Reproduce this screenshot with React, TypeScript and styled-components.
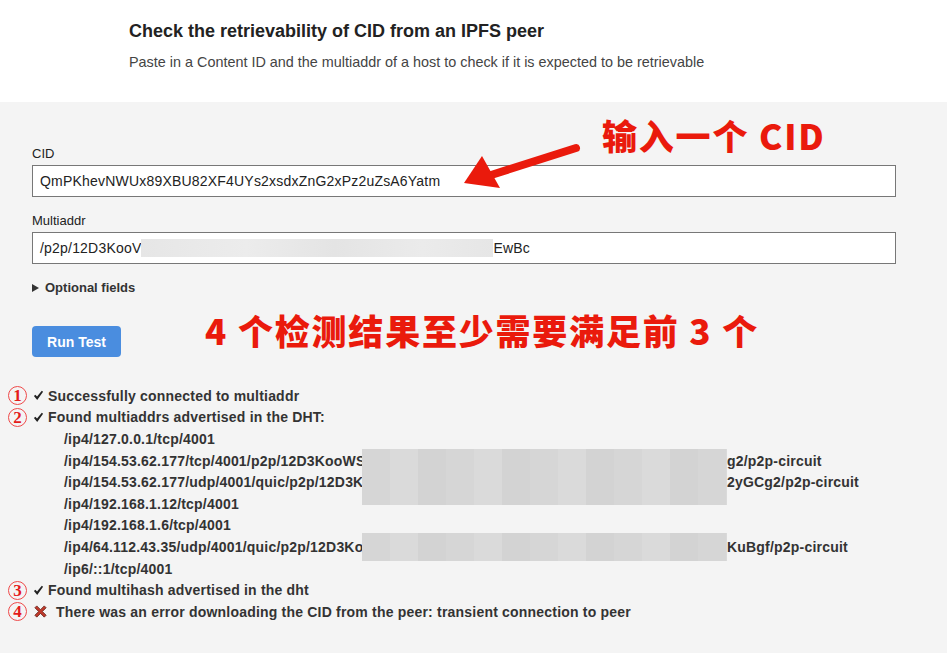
import React from "react";
import styled, { createGlobalStyle } from "styled-components";

const GlobalStyle = createGlobalStyle`
  html, body {
    margin: 0;
    padding: 0;
    background: #f4f4f4;
    font-family: "Liberation Sans", Arial, sans-serif;
    color: #333;
  }
  * { box-sizing: border-box; }
`;

const Page = styled.div`
  position: relative;
  width: 947px;
  height: 653px;
  overflow: hidden;
  background: #f4f4f4;
`;

const Header = styled.header`
  background: #fff;
  height: 102px;
  padding: 21px 0 0 129px;
`;

const Title = styled.h1`
  margin: 0;
  font-size: 18px;
  font-weight: bold;
  color: #222;
  line-height: 21px;
`;

const Subtitle = styled.p`
  margin: 12px 0 0;
  font-size: 14.4px;
  color: #444;
  line-height: 16px;
`;

const Main = styled.main`
  padding: 44px 51px 0 32px;
`;

const Field = styled.div`
  display: flex;
  flex-direction: column;
  margin-bottom: 16px;
`;

const Label = styled.label`
  font-size: 13px;
  color: #222;
  line-height: 15px;
  margin-bottom: 4px;
`;

const InputBox = styled.div`
  position: relative;
  height: 32px;
  border: 1px solid #777;
  background: #fff;
  display: flex;
  align-items: center;
  padding-left: 7px;
  font-size: 14px;
  letter-spacing: 0.2px;
  color: #222;
  white-space: nowrap;
`;

const Blur = styled.span<{ $w: number; $h: number }>`
  display: inline-block;
  width: ${(p) => p.$w}px;
  height: ${(p) => p.$h}px;
  vertical-align: middle;
  background: linear-gradient(
    90deg,
    #e6e6e6 0%,
    #ececec 30%,
    #e4e4e4 55%,
    #ebebeb 80%,
    #e6e6e6 100%
  );
`;

const Optional = styled.div`
  display: flex;
  align-items: center;
  gap: 6px;
  margin-top: 9px;
  font-size: 13px;
  font-weight: bold;
  color: #333;
`;

const Triangle = styled.span`
  width: 0;
  height: 0;
  border-top: 4px solid transparent;
  border-bottom: 4px solid transparent;
  border-left: 7px solid #333;
`;

const RunButton = styled.button`
  margin-top: 31px;
  width: 89px;
  height: 31px;
  border: none;
  border-radius: 4px;
  background: #4a8ddf;
  color: #fff;
  font-family: "Liberation Sans", Arial, sans-serif;
  font-weight: bold;
  font-size: 14px;
`;

const Results = styled.div`
  margin-top: 28px;
  margin-left: -24px;
  display: flex;
  flex-direction: column;
`;

const ResultRow = styled.div<{ $indent?: boolean }>`
  display: flex;
  align-items: center;
  height: 21.6px;
  font-size: 14px;
  letter-spacing: 0.2px;
  font-weight: bold;
  color: #333;
  white-space: nowrap;
  padding-left: ${(p) => (p.$indent ? "56px" : "0")};
`;

const Circled = styled.span`
  width: 19px;
  height: 19px;
  border: 1px solid #ef4a4a;
  border-radius: 50%;
  color: #e41b1b;
  font-family: "Liberation Serif", "Times New Roman", serif;
  font-size: 17px;
  line-height: 1;
  font-weight: bold;
  letter-spacing: 0;
  display: inline-flex;
  align-items: center;
  justify-content: center;
  margin-right: 6px;
  flex-shrink: 0;
`;

const CheckIcon = styled.svg`
  width: 11px;
  height: 11px;
  margin-right: 4px;
  flex-shrink: 0;
`;

const CrossIcon = styled.svg`
  width: 15px;
  height: 15px;
  margin-right: 8px;
  flex-shrink: 0;
`;

const Annotation = styled.div<{ $x: number; $y: number }>`
  position: absolute;
  left: ${(p) => p.$x}px;
  top: ${(p) => p.$y}px;
  color: #ea1a0c;
  font-family: "Noto Sans CJK SC", "Liberation Sans", sans-serif;
  font-weight: 900;
  font-size: 35px;
  letter-spacing: 1.8px;
  line-height: 40px;
  white-space: nowrap;
`;

const Arrow = styled.svg`
  position: absolute;
  left: 458px;
  top: 138px;
  width: 130px;
  height: 52px;
`;

const BlurPatch = styled.div<{ $x: number; $y: number; $w: number; $h: number }>`
  position: absolute;
  left: ${(p) => p.$x}px;
  top: ${(p) => p.$y}px;
  width: ${(p) => p.$w}px;
  height: ${(p) => p.$h}px;
  background: repeating-linear-gradient(
    90deg,
    #d6d6d6 0px,
    #d6d6d6 28px,
    #dadada 28px,
    #dadada 56px,
    #d3d3d3 56px,
    #d3d3d3 84px
  );
`;

const Tail = styled.span`
  position: absolute;
  left: 727px;
`;

const addrs = [
  "/ip4/127.0.0.1/tcp/4001",
  "/ip4/154.53.62.177/tcp/4001/p2p/12D3KooWS",
  "/ip4/154.53.62.177/udp/4001/quic/p2p/12D3K",
  "/ip4/192.168.1.12/tcp/4001",
  "/ip4/192.168.1.6/tcp/4001",
  "/ip4/64.112.43.35/udp/4001/quic/p2p/12D3Ko",
  "/ip6/::1/tcp/4001",
];

// 가려진 주소의 끝부분
const tails: Record<number, string> = {
  1: "g2/p2p-circuit",
  2: "2yGCg2/p2p-circuit",
  5: "KuBgf/p2p-circuit",
};

const Check = () => (
  <CheckIcon viewBox="0 0 12 12">
    <path
      d="M1 6.6 L2.6 5.2 L4.4 7.2 L9.6 0.8 L11 2 L4.6 10.8 Z"
      fill="#222"
    />
  </CheckIcon>
);

export default function App() {
  return (
    <Page>
      <GlobalStyle />
      <Header>
        <Title>Check the retrievability of CID from an IPFS peer</Title>
        <Subtitle>
          Paste in a Content ID and the multiaddr of a host to check if it is
          expected to be retrievable
        </Subtitle>
      </Header>
      <Main>
        <Field>
          <Label>CID</Label>
          <InputBox>QmPKhevNWUx89XBU82XF4UYs2xsdxZnG2xPz2uZsA6Yatm</InputBox>
        </Field>
        <Field>
          <Label>Multiaddr</Label>
          <InputBox>
            /p2p/12D3KooV
            <Blur $w={352} $h={18} />
            EwBc
          </InputBox>
        </Field>
        <Optional>
          <Triangle />
          Optional fields
        </Optional>
        <RunButton>Run Test</RunButton>
        <Results>
          <ResultRow>
            <Circled>1</Circled>
            <Check />
            Successfully connected to multiaddr
          </ResultRow>
          <ResultRow>
            <Circled>2</Circled>
            <Check />
            Found multiaddrs advertised in the DHT:
          </ResultRow>
          {addrs.map((a, i) => (
            <ResultRow $indent key={a}>
              {a}
              {tails[i] && <Tail>{tails[i]}</Tail>}
            </ResultRow>
          ))}
          <ResultRow>
            <Circled>3</Circled>
            <Check />
            Found multihash advertised in the dht
          </ResultRow>
          <ResultRow>
            <Circled>4</Circled>
            <CrossIcon viewBox="0 0 16 16">
              <path
                d="M2 4 L4 2 L8 6 L12 2 L14 4 L10 8 L14 12 L12 14 L8 10 L4 14 L2 12 L6 8 Z"
                fill="#c0392b"
                stroke="#5a1a10"
                strokeWidth="0.8"
                strokeLinejoin="round"
              />
            </CrossIcon>
            There was an error downloading the CID from the peer: transient
            connection to peer
          </ResultRow>
        </Results>
      </Main>

      <BlurPatch $x={362} $y={449} $w={365} $h={56} />
      <BlurPatch $x={362} $y={533} $w={365} $h={28} />

      <Annotation $x={602} $y={115}>输入一个 CID</Annotation>
      <Annotation $x={205} $y={310}>4 个检测结果至少需要满足前 3 个</Annotation>
      <Arrow viewBox="0 0 130 52">
        <line x1="118" y1="10" x2="30" y2="38" stroke="#ea1a0c" strokeWidth="8" strokeLinecap="round" />
        <polygon points="6,45 24,18 42,50" fill="#ea1a0c" />
      </Arrow>
    </Page>
  );
}
